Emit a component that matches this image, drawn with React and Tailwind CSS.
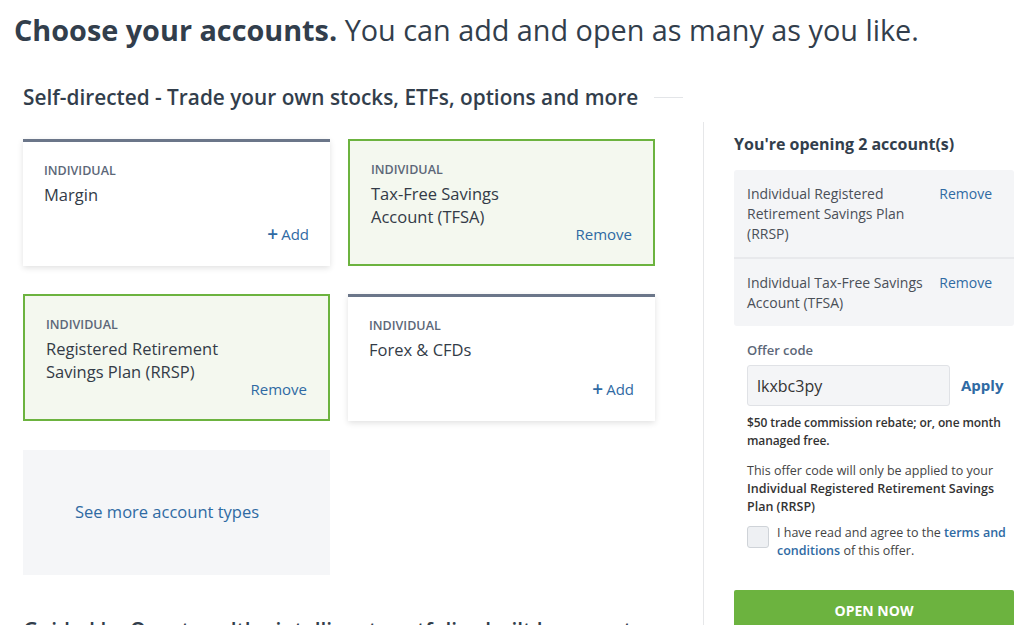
import React from "react";

const cards = [
  { id: "margin", type: "Individual", name: "Margin", selected: false },
  { id: "tfsa", type: "Individual", name: "Tax-Free Savings Account (TFSA)", selected: true },
  { id: "rrsp", type: "Individual", name: "Registered Retirement Savings Plan (RRSP)", selected: true },
  { id: "forex", type: "Individual", name: "Forex & CFDs", selected: false },
];

const opening = [
  "Individual Registered Retirement Savings Plan (RRSP)",
  "Individual Tax-Free Savings Account (TFSA)",
];

function AccountCard({ card }) {
  return (
    <div
      className={`h-[127px] flex flex-col pl-[21px] pr-[21px] pt-[21px] ${
        card.selected
          ? "pb-[20px] border-2 border-[#6cb33f] bg-[#f4f8ef]"
          : "pb-[22px] border-t-[3px] border-[#6b7689] bg-white shadow-[0_2px_6px_rgba(0,0,0,0.12)]"
      }`}
    >
      <span className="text-[12.5px] leading-[16px] font-semibold uppercase text-[#5c6778]">{card.type}</span>
      <span className="mt-[4px] min-h-0 text-[16.5px] leading-[23px] text-[#333b47] w-[185px]">{card.name}</span>
      <div className="mt-auto flex justify-end shrink-0">
        {card.selected ? (
          <button className="text-[15px] leading-[20px] text-[#2f6aa3]">Remove</button>
        ) : (
          <button className="text-[15px] leading-[20px] text-[#2f6aa3] flex items-center gap-[3px]">
            <span className="text-[19px] leading-[20px] font-semibold">+</span>Add
          </button>
        )}
      </div>
    </div>
  );
}

export default function App() {
  return (
    <div className="w-[1024px] h-[625px] overflow-hidden bg-white font-['Open_Sans',sans-serif] text-[#323e4c]">
      {/* Page title */}
      <h1 className="pl-[14px] pt-[11px] text-[28.8px] leading-[38px] m-0">
        <span className="font-bold">Choose your accounts.</span> You can add and open as many as you like.
      </h1>

      <div className="flex mt-[3px]">
        {/* Left column */}
        <div className="w-[703px] pl-[23px]">
          <div className="flex items-center gap-[16px] pt-[31px]">
            <h2 className="text-[20.8px] leading-[28px] font-semibold m-0">
              Self-directed - Trade your own stocks, ETFs, options and more
            </h2>
            <div className="w-[29px] h-px bg-[#e3e5e8]" />
          </div>

          <div className="grid grid-cols-[307px_307px] gap-x-[18px] gap-y-[28px] mt-[28px]">
            {cards.map((card) => (
              <AccountCard key={card.id} card={card} />
            ))}
            <div className="h-[125px] mt-[1px] bg-[#f5f6f8] flex items-center pl-[52px]">
              <a className="text-[16.5px] text-[#2f6aa3]">See more account types</a>
            </div>
          </div>

          <h2 className="mt-[41px] text-[20.8px] leading-[28px] font-semibold m-0 whitespace-nowrap">
            Guided by Questwealth - intelligent portfolios built by experts
          </h2>
        </div>

        {/* Right summary panel */}
        <aside className="mt-[70px] border-l border-[#e6e7e9] pl-[30px] pr-[10px] w-[321px] flex flex-col">
          <h3 className="mt-[10px] text-[16px] leading-[24px] font-bold m-0">You're opening 2 account(s)</h3>

          <div className="mt-[14px] bg-[#f4f5f7] rounded-[3px]">
            {opening.map((name, i) => (
              <div
                key={name}
                className={`flex justify-between pl-[13px] pr-[22px] pt-[14px] pb-[13px] ${i === 0 ? "border-b-2 border-[#e8e9ec]" : ""}`}
              >
                <span className="w-[185px] text-[14px] leading-[20px] text-[#4a4f57]">{name}</span>
                <button className="text-[14px] leading-[20px] text-[#2f6aa3] self-start">Remove</button>
              </div>
            ))}
          </div>

          <div className="pl-[13px]">
            <label className="block mt-[15px] text-[13px] leading-[18px] font-semibold text-[#5c6778]">Offer code</label>
            <div className="flex items-center mt-[6px]">
              <div className="w-[203px] h-[41px] bg-[#f4f5f7] border border-[#e0e2e6] rounded-[3px] flex items-center px-[9px] text-[16px] text-[#333]">
                lkxbc3py
              </div>
              <button className="ml-[11px] text-[15px] font-bold text-[#2f6aa3]">Apply</button>
            </div>

            <p className="mt-[8px] text-[12px] leading-[18px] font-semibold text-[#333] tracking-[-0.1px]">
              $50 trade commission rebate; or, one month managed free.
            </p>
            <p className="mt-[12px] text-[12.5px] leading-[18px] text-[#444]">
              This offer code will only be applied to your{" "}
              <span className="font-semibold text-[#333]">Individual Registered Retirement Savings Plan (RRSP)</span>
            </p>

            <label className="flex gap-[8px] mt-[8px]">
              <span className="mt-[2px] w-[22px] h-[22px] shrink-0 rounded-[3px] border border-[#cfd3d8] bg-[#eef0f3]" />
              <span className="text-[12.5px] leading-[18px] text-[#444]">
                I have read and agree to the{" "}
                <a className="font-semibold text-[#2f6aa3]">terms and conditions</a> of this offer.
              </span>
            </label>
          </div>

          <button className="mt-[30px] h-[40px] w-full bg-[#6cb33f] text-white text-[14px] font-bold uppercase rounded-t-[2px]">
            Open Now
          </button>
        </aside>
      </div>
    </div>
  );
}
